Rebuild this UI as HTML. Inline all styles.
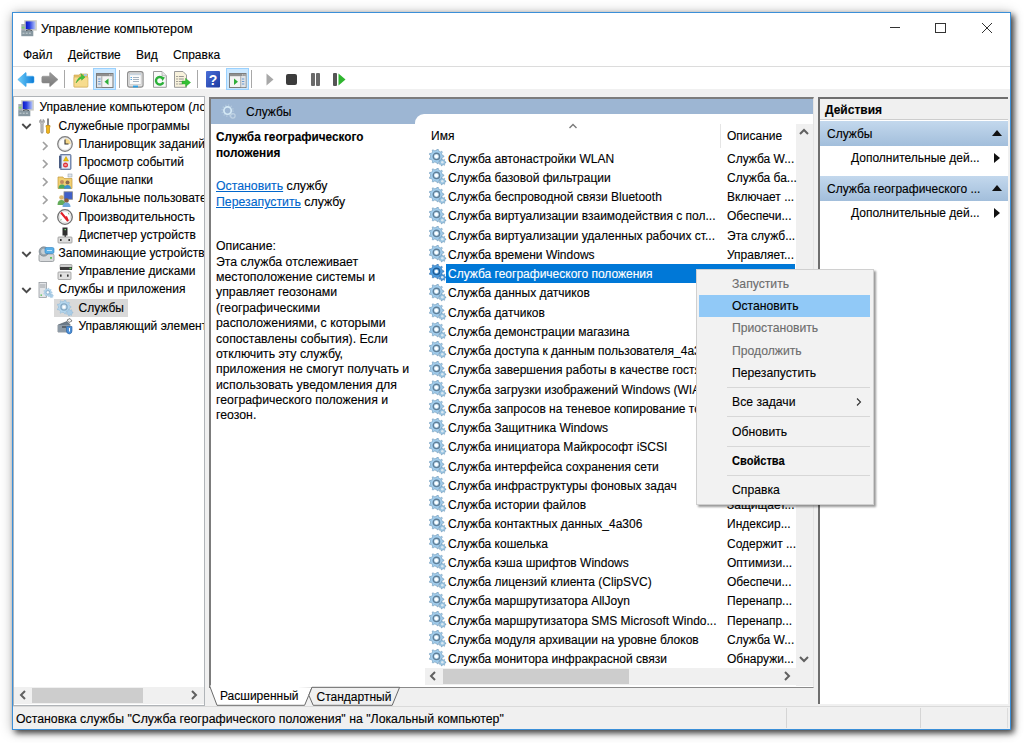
<!DOCTYPE html>
<html><head><meta charset="utf-8">
<style>
*{box-sizing:border-box}
html,body{margin:0;padding:0;width:1024px;height:743px;overflow:hidden;background:#fff;font-family:"Liberation Sans",sans-serif;font-size:12px;color:#000}
div,svg{position:absolute}
.t{white-space:nowrap;line-height:19px;height:19px;-webkit-text-stroke:0.12px currentColor}
.win{left:12px;top:12px;width:999px;height:718px;border:1px solid #3b8fd8;background:#f0f0f0;box-shadow:3px 3px 6px rgba(0,0,0,.7),0 1px 12px rgba(0,0,0,.25)}
.white{background:#fff}
.title{left:41px;top:19.5px;font-size:12.5px}
.menu{top:46px;font-size:12px}
.tb-sep{width:1px;background:#a8a8a8;top:70px;height:18px}
.pressed{background:#cce8ff;border:1px solid #99d1ff;top:68px;height:22px}
.pane{background:#fff;border:1px solid #a3a3a3}
.tr{font-size:12px}
.treesel{left:54px;width:74px;height:18px;background:#d9d9d9}
.ti{width:17px;height:17px}
.li{left:448px;font-size:12px}
.ld{left:727px;font-size:12px}
.li.sel,.ld.sel{color:#fff}
.selrow{left:446px;width:349px;height:19px;background:#0078d7}
.dl{left:216px;font-size:12.3px;line-height:16px;height:16px}
.mi{left:732px;font-size:12.2px;line-height:17px;height:17px;color:#000}
.mi.dis{color:#6d6d6d}
.mi.bold{font-weight:bold;font-size:12.6px;transform:scaleX(.88);transform-origin:0 50%}
.mhl{left:699px;width:171px;height:22px;background:#91c9f7}
.msep{left:727px;width:143px;height:1px;background:#d7d7d7}
.gear{width:18px;height:18px}
</style></head><body>
<svg width="0" height="0" style="position:absolute">
 <defs>
  <g id="g">
   <path d="M12.37 5.40 L12.53 6.12 L13.98 6.46 L13.98 7.54 L12.53 7.88 L12.14 9.23 L11.80 9.88 L12.69 11.07 L12.00 11.90 L10.67 11.23 L9.50 12.01 L8.82 12.29 L8.74 13.78 L7.68 13.97 L7.10 12.60 L5.70 12.45 L4.99 12.23 L3.98 13.31 L3.04 12.77 L3.48 11.35 L2.50 10.34 L2.10 9.71 L0.63 9.89 L0.26 8.88 L1.50 8.07 L1.41 6.66 L1.50 5.93 L0.26 5.12 L0.63 4.11 L2.10 4.29 L2.93 3.15 L3.48 2.65 L3.04 1.23 L3.98 0.69 L4.99 1.77 L6.36 1.44 L7.10 1.40 L7.68 0.03 L8.74 0.22 L8.82 1.71 L10.09 2.33 L10.67 2.77 L12.00 2.10 L12.69 2.93 L11.80 4.12Z" fill="#a2cdec" stroke="#6f98b8" stroke-width=".6"/>
   <circle cx="7" cy="7" r="3" fill="#c8e4f6" stroke="#5f7f99" stroke-width="1.3"/>
   <circle cx="7" cy="7" r="1.5" fill="#fff"/>
   <path d="M15.01 11.61 L15.15 12.08 L15.97 12.19 L15.97 13.01 L15.15 13.12 L14.87 13.87 L14.60 14.27 L15.03 14.98 L14.38 15.50 L13.78 14.92 L13.03 15.16 L12.54 15.20 L12.25 15.98 L11.45 15.80 L11.52 14.97 L10.86 14.53 L10.53 14.18 L9.74 14.44 L9.38 13.69 L10.08 13.24 L10.00 12.44 L10.08 11.96 L9.38 11.51 L9.74 10.76 L10.53 11.02 L11.10 10.47 L11.52 10.23 L11.45 9.40 L12.25 9.22 L12.54 10.00 L13.33 10.10 L13.78 10.28 L14.38 9.70 L15.03 10.22 L14.60 10.93Z" fill="#98c4e2" stroke="#6990b0" stroke-width=".45"/>
   <circle cx="12.6" cy="12.6" r="1.2" fill="#dbe8f0"/>
  </g>
  <g id="gb">
   <path d="M12.37 5.40 L12.53 6.12 L13.98 6.46 L13.98 7.54 L12.53 7.88 L12.14 9.23 L11.80 9.88 L12.69 11.07 L12.00 11.90 L10.67 11.23 L9.50 12.01 L8.82 12.29 L8.74 13.78 L7.68 13.97 L7.10 12.60 L5.70 12.45 L4.99 12.23 L3.98 13.31 L3.04 12.77 L3.48 11.35 L2.50 10.34 L2.10 9.71 L0.63 9.89 L0.26 8.88 L1.50 8.07 L1.41 6.66 L1.50 5.93 L0.26 5.12 L0.63 4.11 L2.10 4.29 L2.93 3.15 L3.48 2.65 L3.04 1.23 L3.98 0.69 L4.99 1.77 L6.36 1.44 L7.10 1.40 L7.68 0.03 L8.74 0.22 L8.82 1.71 L10.09 2.33 L10.67 2.77 L12.00 2.10 L12.69 2.93 L11.80 4.12Z" fill="#b4d6ee" stroke="#8fb6d4" stroke-width=".5"/>
   <circle cx="7" cy="7" r="3.1" fill="#cfe4f3" stroke="#86a9c4" stroke-width="1.3"/>
   <circle cx="7" cy="7" r="1.5" fill="#fff"/>
   <path d="M15.01 11.61 L15.15 12.08 L15.97 12.19 L15.97 13.01 L15.15 13.12 L14.87 13.87 L14.60 14.27 L15.03 14.98 L14.38 15.50 L13.78 14.92 L13.03 15.16 L12.54 15.20 L12.25 15.98 L11.45 15.80 L11.52 14.97 L10.86 14.53 L10.53 14.18 L9.74 14.44 L9.38 13.69 L10.08 13.24 L10.00 12.44 L10.08 11.96 L9.38 11.51 L9.74 10.76 L10.53 11.02 L11.10 10.47 L11.52 10.23 L11.45 9.40 L12.25 9.22 L12.54 10.00 L13.33 10.10 L13.78 10.28 L14.38 9.70 L15.03 10.22 L14.60 10.93Z" fill="#a9cce6" stroke="#88b0cf" stroke-width=".4"/>
  </g>
 <g id="gh">
   <circle cx="7" cy="7" r="5.6" fill="none" stroke="#b9cde0" stroke-width="2.2" stroke-dasharray="1.3 1.6" opacity=".8"/>
   <circle cx="7" cy="7" r="3.9" fill="none" stroke="#dcf0fa" stroke-width="1.8"/>
   <circle cx="12.6" cy="12.6" r="2.4" fill="none" stroke="#c4d6e6" stroke-width="1.3"/>
  </g>
 <g id="gs">
   <path d="M12.37 5.40 L12.53 6.12 L13.98 6.46 L13.98 7.54 L12.53 7.88 L12.14 9.23 L11.80 9.88 L12.69 11.07 L12.00 11.90 L10.67 11.23 L9.50 12.01 L8.82 12.29 L8.74 13.78 L7.68 13.97 L7.10 12.60 L5.70 12.45 L4.99 12.23 L3.98 13.31 L3.04 12.77 L3.48 11.35 L2.50 10.34 L2.10 9.71 L0.63 9.89 L0.26 8.88 L1.50 8.07 L1.41 6.66 L1.50 5.93 L0.26 5.12 L0.63 4.11 L2.10 4.29 L2.93 3.15 L3.48 2.65 L3.04 1.23 L3.98 0.69 L4.99 1.77 L6.36 1.44 L7.10 1.40 L7.68 0.03 L8.74 0.22 L8.82 1.71 L10.09 2.33 L10.67 2.77 L12.00 2.10 L12.69 2.93 L11.80 4.12Z" fill="#4f9ee0" stroke="#2f6fae" stroke-width=".6"/>
   <circle cx="7" cy="7" r="3" fill="#7fbbec" stroke="#1f5a92" stroke-width="1.3"/>
   <circle cx="7" cy="7" r="1.5" fill="#fff"/>
   <path d="M15.01 11.61 L15.15 12.08 L15.97 12.19 L15.97 13.01 L15.15 13.12 L14.87 13.87 L14.60 14.27 L15.03 14.98 L14.38 15.50 L13.78 14.92 L13.03 15.16 L12.54 15.20 L12.25 15.98 L11.45 15.80 L11.52 14.97 L10.86 14.53 L10.53 14.18 L9.74 14.44 L9.38 13.69 L10.08 13.24 L10.00 12.44 L10.08 11.96 L9.38 11.51 L9.74 10.76 L10.53 11.02 L11.10 10.47 L11.52 10.23 L11.45 9.40 L12.25 9.22 L12.54 10.00 L13.33 10.10 L13.78 10.28 L14.38 9.70 L15.03 10.22 L14.60 10.93Z" fill="#4a96d6" stroke="#2f6fae" stroke-width=".45"/>
   <circle cx="12.6" cy="12.6" r="1.2" fill="#dbe8f0"/>
  </g>
 </defs>
</svg>

<div class="win">
</div>

<!-- title bar -->
<div class="white" style="left:13px;top:13px;width:997px;height:54px"></div>
<div class="t title">Управление компьютером</div>
<svg style="left:21px;top:19.5px" width="16" height="17" viewBox="0 0 16 17"><defs><linearGradient id="scr" x1="0" y1="0" x2="1" y2="0"><stop offset="0" stop-color="#0a18c8"/><stop offset=".4" stop-color="#2a40e0"/><stop offset="1" stop-color="#b8c8fa"/></linearGradient></defs><rect x="3.2" y="0.2" width="12.6" height="10.4" fill="#cbcbc3"/><rect x="4.7" y="1.4" width="9.8" height="7.8" fill="url(#scr)"/><rect x="0.3" y="4" width="4" height="7" fill="#a9b0b4"/><rect x="0.8" y="6.8" width="2.6" height="1.6" fill="#7cd66a"/><path d="M5 10.6 q3 -1.6 6 0" stroke="#333" stroke-width="1" fill="none"/><rect x="0.3" y="10.6" width="12" height="5.6" fill="#8797a0"/><path d="M1.5 13.2h9.6" stroke="#c9d2d6" stroke-width="1" stroke-dasharray="2 1.2"/></svg>
<!-- window buttons -->
<div style="left:890px;top:27px;width:10px;height:1px;background:#333"></div>
<div style="left:935px;top:22.5px;width:11px;height:10px;border:1px solid #333"></div>
<svg style="left:981px;top:22px" width="12" height="12" viewBox="0 0 12 12"><path d="M1 1 L11 11 M11 1 L1 11" stroke="#333" stroke-width="1"/></svg>

<!-- menu -->
<div class="t menu" style="left:23px">Файл</div>
<div class="t menu" style="left:68px">Действие</div>
<div class="t menu" style="left:136px">Вид</div>
<div class="t menu" style="left:173px">Справка</div>
<div style="left:13px;top:66px;width:997px;height:1px;background:#dcdcdc"></div>

<!-- toolbar -->
<div class="white" style="left:13px;top:67px;width:997px;height:22px"></div>
<svg style="left:17px;top:72px" width="18" height="16" viewBox="0 0 18 16"><defs><linearGradient id="ba" x1="0" y1="0" x2="1" y2="0"><stop offset="0" stop-color="#6fd0fb"/><stop offset="1" stop-color="#0b7ad6"/></linearGradient></defs><path d="M0.8 7.6 L8.6 0.6 Q9.2 0.4 9.2 1.2 V4.2 H15.8 Q17 4.2 17 5.4 V9.8 Q17 11 15.8 11 H9.2 V14 Q9.2 14.8 8.6 14.6 Z" fill="url(#ba)" stroke="#3aa6ea" stroke-width=".5"/></svg>
<svg style="left:41px;top:72px" width="18" height="16" viewBox="0 0 18 16"><defs><linearGradient id="fa" x1="0" y1="0" x2="0" y2="1"><stop offset="0" stop-color="#9a9a9a"/><stop offset="1" stop-color="#7a7a7a"/></linearGradient></defs><path d="M17 7.6 L9.2 0.6 Q8.6 0.4 8.6 1.2 V4.2 H2 Q0.8 4.2 0.8 5.4 V9.8 Q0.8 11 2 11 H8.6 V14 Q8.6 14.8 9.2 14.6 Z" fill="url(#fa)" stroke="#8a8a8a" stroke-width=".5"/></svg>
<div class="tb-sep" style="left:64px"></div>
<svg style="left:73px;top:72px" width="16" height="16" viewBox="0 0 16 16"><path d="M1 3 H6 L7 2 H14.5 V15 H1Z" fill="#e9c46a" stroke="#c9a24a" stroke-width=".6"/><rect x="1" y="5" width="14" height="10" rx=".8" fill="#f7dc8e" stroke="#d2ad55" stroke-width=".6"/><rect x="11" y="2" width="3" height="2" fill="#a8c8e0"/><path d="M3 11 C4.5 7 6 5 8.5 4.5 L7.8 1.5 L12 5.2 L8.6 8.2 L8.5 6.4 C6.6 6.8 5 8.6 3 11Z" fill="#3fc23f" stroke="#2a9a2a" stroke-width=".4"/></svg>
<div class="pressed" style="left:93px;width:23px"></div>
<svg style="left:96px;top:73px" width="18" height="15" viewBox="0 0 18 15"><rect x="0.5" y="0.5" width="16.5" height="14" fill="#f4f4f4" stroke="#7d7d7d"/><rect x="1" y="1" width="15.5" height="2.2" fill="#8f8f8f"/><rect x="13" y="1.4" width="1" height="1" fill="#ddd"/><rect x="14.6" y="1.4" width="1" height="1" fill="#ddd"/><rect x="1" y="3.2" width="4.8" height="11" fill="#dfe3e8"/><path d="M5.8 3.2 V14" stroke="#9a9a9a" stroke-width=".8"/><path d="M2.2 6h2.4M2.2 8.5h2.4M2.2 11h2.4" stroke="#6a9ad0" stroke-width="1.1"/><path d="M12.5 5.5 L8.5 8.7 L12.5 11.9Z" fill="#2fae3a"/></svg>
<div class="tb-sep" style="left:119px"></div>
<svg style="left:127px;top:71px" width="17" height="17" viewBox="0 0 17 17"><rect x="0.6" y="0.6" width="15.5" height="15.5" rx="2.2" fill="#e2e2e2" stroke="#8c8c8c" stroke-width="1.1"/><rect x="2.6" y="2.6" width="11.5" height="11" fill="#fafafa" stroke="#b8b8b8" stroke-width=".5"/><rect x="2.6" y="2.6" width="11.5" height="1.6" fill="#c8d4e0"/><path d="M6 6.5h6M6 8.5h6M6 10.5h6" stroke="#9aa8b8" stroke-width=".9"/><path d="M3.5 6.5h1.5M3.5 8.5h1.5" stroke="#4aa0e0" stroke-width=".9"/><rect x="6" y="14.6" width="5" height="1.8" fill="#2aa0e6"/></svg>
<svg style="left:153px;top:71px" width="14" height="17" viewBox="0 0 14 17"><path d="M0.5 0.5 H9 L13.3 4.8 V16.3 H0.5Z" fill="#f9f9f9" stroke="#9a9a9a"/><path d="M9 0.5 V4.8 H13.3" fill="#e6e6e6" stroke="#9a9a9a" stroke-width=".6"/><path d="M10.3 11.2 A3.8 3.8 0 1 1 9.6 7.2" fill="none" stroke="#2cb13a" stroke-width="2.4"/><path d="M7.5 5.2 L12 6.4 L9.4 10Z" fill="#2cb13a"/></svg>
<svg style="left:174px;top:71px" width="17" height="17" viewBox="0 0 17 17"><path d="M0.5 0.5 H9 L12.5 4 V16.3 H0.5Z" fill="#f8f2dc" stroke="#9a9a9a"/><path d="M2.5 5.5h1M2.5 8h1M2.5 10.5h1M2.5 13h1" stroke="#555" stroke-width="1"/><path d="M4.8 5.5h5M4.8 8h5M4.8 10.5h3.5M4.8 13h3.5" stroke="#8a8a8a" stroke-width=".9"/><path d="M8 10 H11.5 V7.3 L16.6 11.5 L11.5 15.7 V13 H8Z" fill="#34c034" stroke="#22a022" stroke-width=".4"/></svg>
<div class="tb-sep" style="left:197px"></div>
<svg style="left:206px;top:71px" width="14" height="17" viewBox="0 0 14 17"><defs><linearGradient id="hb" x1="0" y1="0" x2="1" y2="1"><stop offset="0" stop-color="#4a6fd8"/><stop offset="1" stop-color="#1d3aa0"/></linearGradient></defs><rect x="0" y="0" width="14" height="16.5" rx="1" fill="url(#hb)"/><text x="7" y="13.5" font-family="Liberation Sans" font-size="14" font-weight="bold" fill="#fff" text-anchor="middle">?</text></svg>
<div class="pressed" style="left:226px;width:23px"></div>
<svg style="left:229px;top:73px" width="18" height="15" viewBox="0 0 18 15"><rect x="0.5" y="0.5" width="16.5" height="14" fill="#f4f4f4" stroke="#7d7d7d"/><rect x="1" y="1" width="15.5" height="2.2" fill="#8f8f8f"/><rect x="13" y="1.4" width="1" height="1" fill="#ddd"/><rect x="14.6" y="1.4" width="1" height="1" fill="#ddd"/><rect x="11.7" y="3.2" width="4.8" height="11" fill="#dfe3e8"/><path d="M11.7 3.2 V14" stroke="#9a9a9a" stroke-width=".8"/><path d="M12.9 6h2.4M12.9 8.5h2.4M12.9 11h2.4" stroke="#6a9ad0" stroke-width="1.1"/><path d="M5 5.5 L9 8.7 L5 11.9Z" fill="#2fae3a"/></svg>
<div class="tb-sep" style="left:251px"></div>
<svg style="left:266px;top:73px" width="8" height="13" viewBox="0 0 8 13"><path d="M0.5 0.5 L7.5 6.5 L0.5 12.5Z" fill="#a8a8a8"/></svg>
<div style="left:286px;top:74px;width:11px;height:11px;background:#3c3c3c;border-radius:2px"></div>
<div style="left:311px;top:73px;width:3.5px;height:13px;background:#6a6a6a;border-radius:1px"></div>
<div style="left:316px;top:73px;width:3.5px;height:13px;background:#6a6a6a;border-radius:1px"></div>
<div style="left:333px;top:73px;width:3.5px;height:13px;background:#555;border-radius:1px"></div>
<svg style="left:338px;top:73px" width="8" height="13" viewBox="0 0 8 13"><path d="M0.5 0.5 L7.5 6.5 L0.5 12.5Z" fill="#2fb52f"/></svg>

<!-- left tree pane -->
<div class="pane" style="left:13px;top:96px;width:192px;height:610px;border-color:#b0b4b8"></div>
<div style="left:0;top:0;width:203.5px;height:687px;overflow:hidden">
<svg class="ti" style="left:18px;top:100px" width="17" height="17" viewBox="0 0 17 17"><defs><linearGradient id="scr2" x1="0" y1="0" x2="1" y2="0"><stop offset="0" stop-color="#0a18c8"/><stop offset=".4" stop-color="#2a40e0"/><stop offset="1" stop-color="#b8c8fa"/></linearGradient></defs><rect x="3.2" y="0.2" width="12.6" height="10.4" fill="#cbcbc3"/><rect x="4.7" y="1.4" width="9.8" height="7.8" fill="url(#scr2)"/><rect x="0.3" y="4" width="4" height="7" fill="#a9b0b4"/><rect x="0.8" y="6.8" width="2.6" height="1.6" fill="#7cd66a"/><path d="M5 10.6 q3 -1.6 6 0" stroke="#333" stroke-width="1" fill="none"/><rect x="0.3" y="10.6" width="12" height="5.6" fill="#8797a0"/><path d="M1.5 13.2h9.6" stroke="#c9d2d6" stroke-width="1" stroke-dasharray="2 1.2"/></svg>
<div class="t tr" style="left:39.5px;top:98.4px">Управление компьютером (локальным)</div>
<svg class="chev" style="left:20.5px;top:121.1px" width="11" height="11" viewBox="0 0 11 11"><path d="M1.3 3 L5.5 7.2 L9.7 3" fill="none" stroke="#4a4a4a" stroke-width="1.9"/></svg>
<svg class="ti" style="left:38px;top:118px" width="17" height="17" viewBox="0 0 17 17"><path d="M3 1.5 C1 2.5 1.5 5 3 5.5 V14.5 Q4 16 5 14.5 V5.5 C6.5 5 7 2.5 5 1.5 V4 H3Z" fill="#d8d8d8" stroke="#7a7a7a" stroke-width=".8"/><rect x="9.3" y="0.5" width="1.4" height="7" fill="#555"/><path d="M8 7.5 h4 v1.5 l-0.5 .8 v5 q-1.5 1.5 -3 0 v-5 l-0.5 -.8z" fill="#f1b51c" stroke="#b07a00" stroke-width=".6"/></svg>
<div class="t tr" style="left:58.5px;top:116.6px">Служебные программы</div>
<svg class="chev" style="left:40px;top:140.5px" width="10" height="10" viewBox="0 0 10 10"><path d="M3 1 L7 5 L3 9" fill="none" stroke="#a0a0a0" stroke-width="1.7"/></svg>
<svg class="ti" style="left:57px;top:136px" width="17" height="17" viewBox="0 0 17 17"><circle cx="8" cy="8" r="7.3" fill="#e6e6e6" stroke="#7d7d7d" stroke-width="1.2"/><circle cx="8" cy="8" r="5.6" fill="#fdfdfd"/><path d="M8 8 V2.4 A5.6 5.6 0 0 1 13.6 8Z" fill="#f6d88a"/><path d="M8 3.5 V8 H11.5" fill="none" stroke="#333" stroke-width="1.1"/></svg>
<div class="t tr" style="left:78.5px;top:134.8px">Планировщик заданий</div>
<svg class="chev" style="left:40px;top:158.7px" width="10" height="10" viewBox="0 0 10 10"><path d="M3 1 L7 5 L3 9" fill="none" stroke="#a0a0a0" stroke-width="1.7"/></svg>
<svg class="ti" style="left:57px;top:154px" width="17" height="17" viewBox="0 0 17 17"><rect x="3" y="0.5" width="11" height="15" rx="1" fill="#8aa0c8" stroke="#55698f" stroke-width=".8"/><rect x="5" y="1.5" width="8" height="13" fill="#e7ecf5"/><rect x="2" y="2" width="2" height="12" fill="#4b5d82"/><path d="M9 2.5 L11.5 7 H6.5Z" fill="#f5c400" stroke="#b08d00" stroke-width=".5"/><circle cx="8.5" cy="11" r="2.5" fill="#e0323a"/><rect x="7.3" y="10.5" width="2.4" height="1" fill="#fff"/></svg>
<div class="t tr" style="left:78.5px;top:153.0px">Просмотр событий</div>
<svg class="chev" style="left:40px;top:176.9px" width="10" height="10" viewBox="0 0 10 10"><path d="M3 1 L7 5 L3 9" fill="none" stroke="#a0a0a0" stroke-width="1.7"/></svg>
<svg class="ti" style="left:57px;top:173px" width="17" height="17" viewBox="0 0 17 17"><path d="M1 4 h5 l1 1.5 h8 v10 h-14z" fill="#f1cf72" stroke="#c39a3a" stroke-width=".7"/><rect x="11" y="1" width="4" height="3" fill="#dfe6ee" stroke="#8a98a6" stroke-width=".5"/><circle cx="5" cy="9" r="2" fill="#c08a60"/><path d="M1.5 15.5 q0 -4 3.5 -4 q3.5 0 3.5 4z" fill="#4aa860"/><circle cx="10.5" cy="9.5" r="2" fill="#8a6a50"/><path d="M7 15.8 q0 -3.8 3.5 -3.8 q3.5 0 3.5 3.8z" fill="#3d8fd0"/></svg>
<div class="t tr" style="left:78.5px;top:171.2px">Общие папки</div>
<svg class="chev" style="left:40px;top:195.1px" width="10" height="10" viewBox="0 0 10 10"><path d="M3 1 L7 5 L3 9" fill="none" stroke="#a0a0a0" stroke-width="1.7"/></svg>
<svg class="ti" style="left:57px;top:191px" width="17" height="17" viewBox="0 0 17 17"><rect x="7" y="0.8" width="8.5" height="7.5" fill="#4060c8" stroke="#8a8a8a" stroke-width=".8"/><circle cx="4.5" cy="6.5" r="2.3" fill="#d9b46a"/><path d="M0.5 14 q0 -5 4 -5 q4 0 4 5z" fill="#63ab5a"/><circle cx="9.5" cy="9.5" r="2.3" fill="#8a5a3a"/><path d="M5.5 16 q0 -4.5 4 -4.5 q4 0 4 4.5z" fill="#6fa8dc"/></svg>
<div class="t tr" style="left:78.5px;top:189.4px">Локальные пользователи и группы</div>
<svg class="chev" style="left:40px;top:213.3px" width="10" height="10" viewBox="0 0 10 10"><path d="M3 1 L7 5 L3 9" fill="none" stroke="#a0a0a0" stroke-width="1.7"/></svg>
<svg class="ti" style="left:57px;top:209px" width="17" height="17" viewBox="0 0 17 17"><circle cx="8" cy="8" r="7.3" fill="#f4f4f4" stroke="#6f6f6f" stroke-width="1.3"/><circle cx="8" cy="8" r="5.5" fill="#fff" stroke="#d0d0d0" stroke-width=".6"/><path d="M4 3.5 L11 12 L9 7.5" fill="none" stroke="#e21f26" stroke-width="2"/><path d="M3.5 11 l1 -.6 M12 4.5 l-.9 .5" stroke="#4a9a4a" stroke-width=".9"/></svg>
<div class="t tr" style="left:78.5px;top:207.6px">Производительность</div>
<svg class="ti" style="left:57px;top:227px" width="17" height="17" viewBox="0 0 17 17"><rect x="5.5" y="0.5" width="5" height="8" fill="#2f2f2f"/><rect x="7.5" y="2" width="1.5" height="1.2" fill="#6ee06e"/><rect x="7.5" y="8" width="1.5" height="3" fill="#444"/><rect x="1" y="10" width="14" height="6" rx=".8" fill="#dcdcdc" stroke="#8a8a8a" stroke-width=".7"/><rect x="3" y="12" width="1.6" height="2" fill="#333"/><rect x="11.4" y="12" width="1.6" height="2" fill="#333"/></svg>
<div class="t tr" style="left:78.5px;top:225.8px">Диспетчер устройств</div>
<svg class="chev" style="left:20.5px;top:248.5px" width="11" height="11" viewBox="0 0 11 11"><path d="M1.3 3 L5.5 7.2 L9.7 3" fill="none" stroke="#4a4a4a" stroke-width="1.9"/></svg>
<svg class="ti" style="left:38px;top:246px" width="17" height="17" viewBox="0 0 17 17"><rect x="1" y="8" width="15" height="7.5" rx="1.5" fill="#d8dadc" stroke="#8d9296" stroke-width=".8"/><rect x="12" y="11" width="2" height="1.8" fill="#5fc25a"/><circle cx="5.8" cy="5.5" r="4.7" fill="#9aa5ad" stroke="#6b767e" stroke-width=".6"/><circle cx="5.8" cy="5.5" r="2.7" fill="#c7ced3"/><rect x="7" y="1.5" width="9" height="6" rx="1.5" fill="#5ab0e8" stroke="#2f7fbf" stroke-width=".6"/><path d="M9 4.5h5" stroke="#cfe9fb" stroke-width=".9"/></svg>
<div class="t tr" style="left:58.5px;top:244.0px">Запоминающие устройства</div>
<svg class="ti" style="left:57px;top:264px" width="17" height="17" viewBox="0 0 17 17"><rect x="3" y="0.5" width="12" height="5" rx=".8" fill="#cfcfcf" stroke="#8a8a8a" stroke-width=".6"/><rect x="3" y="3" width="12" height="3" fill="#3a3a3a"/><rect x="12.5" y="3.8" width="1.8" height="1.3" fill="#66dd66"/><rect x="1" y="8" width="13" height="7.5" rx=".8" fill="#e0e0e0" stroke="#8a8a8a" stroke-width=".7"/><rect x="3" y="10.5" width="1.6" height="2.2" fill="#333"/><rect x="10" y="10.5" width="1.6" height="2.2" fill="#333"/></svg>
<div class="t tr" style="left:78.5px;top:262.2px">Управление дисками</div>
<svg class="chev" style="left:20.5px;top:284.9px" width="11" height="11" viewBox="0 0 11 11"><path d="M1.3 3 L5.5 7.2 L9.7 3" fill="none" stroke="#4a4a4a" stroke-width="1.9"/></svg>
<svg class="ti" style="left:38px;top:282px" width="17" height="17" viewBox="0 0 17 17"><rect x="1" y="0.5" width="7.5" height="15" fill="#e3e5e8" stroke="#8a9096" stroke-width=".7"/><path d="M2 3h5.5M2 5h5.5" stroke="#8a9096" stroke-width=".8"/><rect x="2.5" y="12.5" width="1.5" height="1.3" fill="#55c055"/><g transform="translate(5.5,6) scale(0.62)"><use href="#gb"/></g></svg>
<div class="t tr" style="left:58.5px;top:280.4px">Службы и приложения</div>
<div class="treesel" style="top:298.9px"></div>
<svg class="ti" style="left:57px;top:300px" width="17" height="17" viewBox="0 0 17 17"><use href="#gb"/></svg>
<div class="t tr" style="left:78.5px;top:298.6px">Службы</div>
<svg class="ti" style="left:57px;top:318px" width="17" height="17" viewBox="0 0 17 17"><path d="M1 7 L10 3.5 L13 6.5 V14 H1Z" fill="#6c7a88" stroke="#4a5560" stroke-width=".6"/><path d="M1 7 H13 V14 H1Z" fill="#8d9aa6"/><path d="M5 9h4" stroke="#2a2f35" stroke-width="1"/><path d="M10 2 l3 -1.5 l2 2.5 l-3 1.5z" fill="#f4f4f4" stroke="#555" stroke-width=".7"/><path d="M9.5 8.5 h5.5 v4.5 q0 2.5 -2.75 3 q-2.75 -.5 -2.75 -3z" fill="#4d8fd6" stroke="#2a5fa0" stroke-width=".6"/><rect x="12" y="10" width="1" height="3.5" fill="#fff"/></svg>
<div class="t tr" style="left:78.5px;top:316.8px">Управляющий элемент WMI</div>
</div>
<!-- left hscroll -->
<div style="left:14px;top:687px;width:190px;height:17px;background:#f0f0f0"></div>
<div style="left:32px;top:688px;width:111px;height:15px;background:#cdcdcd"></div>
<svg style="left:19px;top:690px" width="8" height="10" viewBox="0 0 8 10"><path d="M6 1 L2 5 L6 9" fill="none" stroke="#606060" stroke-width="2"/></svg>
<svg style="left:190px;top:690px" width="8" height="10" viewBox="0 0 8 10"><path d="M2 1 L6 5 L2 9" fill="none" stroke="#606060" stroke-width="2"/></svg>

<!-- middle pane -->
<div class="pane" style="left:209px;top:96.5px;width:605px;height:591.5px;border-color:#8a8a8a;border-left:2px solid #7c7c7c;border-top:2px solid #7c7c7c;border-right-color:#e4e4e4;border-bottom-width:1.5px"></div>
<div style="left:211px;top:98.5px;width:602px;height:25px;background:#9db6d3"></div>
<div style="left:415px;top:113.6px;width:398px;height:12px;background:#fff;border-top-left-radius:9px"></div>
<svg style="left:221px;top:104px" width="16" height="16" viewBox="0 0 17 17"><g opacity=".9"><use href="#gh"/></g></svg>
<div class="t" style="left:246px;top:102.5px">Службы</div>

<div class="t" style="left:216px;top:128.5px;font-weight:bold;font-size:12.4px;line-height:16px;transform:scaleX(.95);transform-origin:0 50%">Служба географического</div>
<div class="t" style="left:216px;top:144.5px;font-weight:bold;font-size:12.4px;line-height:16px;transform:scaleX(.95);transform-origin:0 50%">положения</div>
<div class="t" style="left:216px;top:178px;font-size:12.3px;line-height:16px"><span style="color:#0066cc;text-decoration:underline">Остановить</span> службу</div>
<div class="t" style="left:216px;top:194px;font-size:12.3px;line-height:16px"><span style="color:#0066cc;text-decoration:underline">Перезапустить</span> службу</div>
<div class="t dl" style="top:238.3px">Описание:</div>
<div class="t dl" style="top:253.7px">Эта служба отслеживает</div>
<div class="t dl" style="top:269.0px">местоположение системы и</div>
<div class="t dl" style="top:284.4px">управляет геозонами</div>
<div class="t dl" style="top:299.7px">(географическими</div>
<div class="t dl" style="top:315.1px">расположениями, с которыми</div>
<div class="t dl" style="top:330.5px">сопоставлены события). Если</div>
<div class="t dl" style="top:345.8px">отключить эту службу,</div>
<div class="t dl" style="top:361.2px">приложения не смогут получать и</div>
<div class="t dl" style="top:376.5px">использовать уведомления для</div>
<div class="t dl" style="top:391.9px">географического положения и</div>
<div class="t dl" style="top:407.3px">геозон.</div>

<!-- list header -->
<div class="t" style="left:431px;top:127px">Имя</div>
<svg style="left:568px;top:123px" width="10" height="6" viewBox="0 0 10 6"><path d="M1.5 5 L5 1.5 L8.5 5" fill="none" stroke="#7a7a7a" stroke-width="1.4"/></svg>
<div style="left:720px;top:124px;width:1px;height:24px;background:#e5e5e5"></div>
<div class="t" style="left:727px;top:127px">Описание</div>
<!-- vscroll -->
<div style="left:796px;top:124px;width:17px;height:562px;background:#f0f0f0"></div>
<svg style="left:799px;top:128px" width="10" height="8" viewBox="0 0 10 8"><path d="M1 6 L5 2 L9 6" fill="none" stroke="#606060" stroke-width="2"/></svg>
<svg style="left:799px;top:655px" width="10" height="8" viewBox="0 0 10 8"><path d="M1 2 L5 6 L9 2" fill="none" stroke="#606060" stroke-width="2"/></svg>
<svg class="gear" style="left:429px;top:149px" width="17" height="17" viewBox="0 0 17 17"><use href="#g"/></svg>
<div class="t li" style="top:149.7px">Служба автонастройки WLAN</div>
<div class="t ld" style="top:149.7px">Служба W...</div>
<svg class="gear" style="left:429px;top:168px" width="17" height="17" viewBox="0 0 17 17"><use href="#g"/></svg>
<div class="t li" style="top:168.9px">Служба базовой фильтрации</div>
<div class="t ld" style="top:168.9px">Служба ба...</div>
<svg class="gear" style="left:429px;top:187px" width="17" height="17" viewBox="0 0 17 17"><use href="#g"/></svg>
<div class="t li" style="top:188.2px">Служба беспроводной связи Bluetooth</div>
<div class="t ld" style="top:188.2px">Включает ...</div>
<svg class="gear" style="left:429px;top:207px" width="17" height="17" viewBox="0 0 17 17"><use href="#g"/></svg>
<div class="t li" style="top:207.4px">Служба виртуализации взаимодействия с пол...</div>
<div class="t ld" style="top:207.4px">Обеспечи...</div>
<svg class="gear" style="left:429px;top:226px" width="17" height="17" viewBox="0 0 17 17"><use href="#g"/></svg>
<div class="t li" style="top:226.7px">Служба виртуализации удаленных рабочих ст...</div>
<div class="t ld" style="top:226.7px">Эта служб...</div>
<svg class="gear" style="left:429px;top:245px" width="17" height="17" viewBox="0 0 17 17"><use href="#g"/></svg>
<div class="t li" style="top:245.9px">Служба времени Windows</div>
<div class="t ld" style="top:245.9px">Управляет...</div>
<div class="selrow" style="top:264.1px"></div>
<svg class="gear" style="left:429px;top:264px" width="17" height="17" viewBox="0 0 17 17"><use href="#gs"/></svg>
<div class="t li sel" style="top:265.1px">Служба географического положения</div>
<div class="t ld sel" style="top:265.1px">Разрешает...</div>
<svg class="gear" style="left:429px;top:284px" width="17" height="17" viewBox="0 0 17 17"><use href="#g"/></svg>
<div class="t li" style="top:284.4px">Служба данных датчиков</div>
<div class="t ld" style="top:284.4px">Получает ...</div>
<svg class="gear" style="left:429px;top:303px" width="17" height="17" viewBox="0 0 17 17"><use href="#g"/></svg>
<div class="t li" style="top:303.6px">Служба датчиков</div>
<div class="t ld" style="top:303.6px">Служба да...</div>
<svg class="gear" style="left:429px;top:322px" width="17" height="17" viewBox="0 0 17 17"><use href="#g"/></svg>
<div class="t li" style="top:322.9px">Служба демонстрации магазина</div>
<div class="t ld" style="top:322.9px">Служба де...</div>
<svg class="gear" style="left:429px;top:341px" width="17" height="17" viewBox="0 0 17 17"><use href="#g"/></svg>
<div class="t li" style="top:342.1px">Служба доступа к данным пользователя_4a3...</div>
<div class="t ld" style="top:342.1px">Предостав...</div>
<svg class="gear" style="left:429px;top:361px" width="17" height="17" viewBox="0 0 17 17"><use href="#g"/></svg>
<div class="t li" style="top:361.3px">Служба завершения работы в качестве гостя</div>
<div class="t ld" style="top:361.3px">Обеспечи...</div>
<svg class="gear" style="left:429px;top:380px" width="17" height="17" viewBox="0 0 17 17"><use href="#g"/></svg>
<div class="t li" style="top:380.6px">Служба загрузки изображений Windows (WIA)</div>
<div class="t ld" style="top:380.6px">Обеспечи...</div>
<svg class="gear" style="left:429px;top:399px" width="17" height="17" viewBox="0 0 17 17"><use href="#g"/></svg>
<div class="t li" style="top:399.8px">Служба запросов на теневое копирование тома</div>
<div class="t ld" style="top:399.8px">Координи...</div>
<svg class="gear" style="left:429px;top:418px" width="17" height="17" viewBox="0 0 17 17"><use href="#g"/></svg>
<div class="t li" style="top:419.1px">Служба Защитника Windows</div>
<div class="t ld" style="top:419.1px">Помогает ...</div>
<svg class="gear" style="left:429px;top:438px" width="17" height="17" viewBox="0 0 17 17"><use href="#g"/></svg>
<div class="t li" style="top:438.3px">Служба инициатора Майкрософт iSCSI</div>
<div class="t ld" style="top:438.3px">Управляет...</div>
<svg class="gear" style="left:429px;top:457px" width="17" height="17" viewBox="0 0 17 17"><use href="#g"/></svg>
<div class="t li" style="top:457.5px">Служба интерфейса сохранения сети</div>
<div class="t ld" style="top:457.5px">Эта служб...</div>
<svg class="gear" style="left:429px;top:476px" width="17" height="17" viewBox="0 0 17 17"><use href="#g"/></svg>
<div class="t li" style="top:476.8px">Служба инфраструктуры фоновых задач</div>
<div class="t ld" style="top:476.8px">Служба ин...</div>
<svg class="gear" style="left:429px;top:495px" width="17" height="17" viewBox="0 0 17 17"><use href="#g"/></svg>
<div class="t li" style="top:496.0px">Служба истории файлов</div>
<div class="t ld" style="top:496.0px">Защищает...</div>
<svg class="gear" style="left:429px;top:515px" width="17" height="17" viewBox="0 0 17 17"><use href="#g"/></svg>
<div class="t li" style="top:515.3px">Служба контактных данных_4a306</div>
<div class="t ld" style="top:515.3px">Индексир...</div>
<svg class="gear" style="left:429px;top:534px" width="17" height="17" viewBox="0 0 17 17"><use href="#g"/></svg>
<div class="t li" style="top:534.5px">Служба кошелька</div>
<div class="t ld" style="top:534.5px">Содержит ...</div>
<svg class="gear" style="left:429px;top:553px" width="17" height="17" viewBox="0 0 17 17"><use href="#g"/></svg>
<div class="t li" style="top:553.7px">Служба кэша шрифтов Windows</div>
<div class="t ld" style="top:553.7px">Оптимизи...</div>
<svg class="gear" style="left:429px;top:572px" width="17" height="17" viewBox="0 0 17 17"><use href="#g"/></svg>
<div class="t li" style="top:573.0px">Служба лицензий клиента (ClipSVC)</div>
<div class="t ld" style="top:573.0px">Обеспечи...</div>
<svg class="gear" style="left:429px;top:592px" width="17" height="17" viewBox="0 0 17 17"><use href="#g"/></svg>
<div class="t li" style="top:592.2px">Служба маршрутизатора AllJoyn</div>
<div class="t ld" style="top:592.2px">Перенапр...</div>
<svg class="gear" style="left:429px;top:611px" width="17" height="17" viewBox="0 0 17 17"><use href="#g"/></svg>
<div class="t li" style="top:611.5px">Служба маршрутизатора SMS Microsoft Windo...</div>
<div class="t ld" style="top:611.5px">Перенапр...</div>
<svg class="gear" style="left:429px;top:630px" width="17" height="17" viewBox="0 0 17 17"><use href="#g"/></svg>
<div class="t li" style="top:630.7px">Служба модуля архивации на уровне блоков</div>
<div class="t ld" style="top:630.7px">Служба W...</div>
<svg class="gear" style="left:429px;top:649px" width="17" height="17" viewBox="0 0 17 17"><use href="#g"/></svg>
<div class="t li" style="top:649.9px">Служба монитора инфракрасной связи</div>
<div class="t ld" style="top:649.9px">Обнаружи...</div>
<!-- list hscroll -->
<div style="left:425px;top:668px;width:371px;height:17px;background:#f0f0f0"></div>
<div style="left:443px;top:669px;width:186px;height:15px;background:#cdcdcd"></div>
<svg style="left:429px;top:671px" width="8" height="10" viewBox="0 0 8 10"><path d="M6 1 L2 5 L6 9" fill="none" stroke="#606060" stroke-width="2"/></svg>
<svg style="left:783px;top:671px" width="8" height="10" viewBox="0 0 8 10"><path d="M2 1 L6 5 L2 9" fill="none" stroke="#606060" stroke-width="2"/></svg>

<!-- tabs -->
<svg style="left:208px;top:685px" width="200" height="22" viewBox="0 0 200 22">
 <path d="M1.5 0.5 L9 20.3 H96.6 L100.8 10.2 L104 2.3" fill="#fff" stroke="#6a6a6a" stroke-width="1"/>
 <path d="M104 2.3 L100.8 10.2 L105.2 20.3 H184.2 L191.6 2.3 Z" fill="#f0f0f0" stroke="#6a6a6a" stroke-width="1"/>
</svg>
<div class="t" style="left:220px;top:687px">Расширенный</div>
<div class="t" style="left:316.5px;top:688px">Стандартный</div>

<!-- actions pane -->
<div class="pane" style="left:818px;top:97px;width:190px;height:607px;border:2px solid #6e6e6e;border-right:none;border-bottom:none"></div>
<div style="left:820px;top:99px;width:188px;height:21px;background:#f0f0f0;border-bottom:1px solid #cdcdcd"></div>
<div class="t" style="left:825px;top:101px;font-weight:bold">Действия</div>
<div style="left:820px;top:121px;width:188px;height:25px;background:linear-gradient(#c3d8ed,#a2bedb)"></div>
<div class="t" style="left:827px;top:125px">Службы</div>
<svg style="left:991.5px;top:130px" width="10" height="6" viewBox="0 0 10 6"><path d="M0 6 L5 0 L10 6Z" fill="#111"/></svg>
<div class="t" style="left:851px;top:149px">Дополнительные дей...</div>
<svg style="left:994px;top:153px" width="6" height="10" viewBox="0 0 6 10"><path d="M0 0 L6 5 L0 10Z" fill="#111"/></svg>
<div style="left:820px;top:176px;width:188px;height:25px;background:linear-gradient(#c3d8ed,#a2bedb)"></div>
<div class="t" style="left:827px;top:180.2px">Служба географического ...</div>
<svg style="left:991.5px;top:185px" width="10" height="6" viewBox="0 0 10 6"><path d="M0 6 L5 0 L10 6Z" fill="#111"/></svg>
<div class="t" style="left:851px;top:204px">Дополнительные дей...</div>
<svg style="left:994px;top:208px" width="6" height="10" viewBox="0 0 6 10"><path d="M0 0 L6 5 L0 10Z" fill="#111"/></svg>

<!-- status bar -->
<div style="left:13px;top:706px;width:997px;height:23px;background:#f0f0f0;border-top:1px solid #dadada"></div>
<div class="t" style="left:16px;top:710px;font-size:12.3px">Остановка службы "Служба географического положения" на "Локальный компьютер"</div>
<div style="left:786px;top:708px;width:1px;height:20px;background:#d5d5d5"></div>
<div style="left:920px;top:708px;width:1px;height:20px;background:#d5d5d5"></div>
<div style="left:1007px;top:708px;width:1px;height:20px;background:#dcdcdc"></div>

<!-- context menu -->
<div style="left:696px;top:269px;width:178px;height:236px;background:#f2f2f2;border:1px solid #d0d0d0;box-shadow:2px 2px 2px rgba(0,0,0,.4)"></div>
<div class="t mi dis" style="top:276.2px">Запустить</div>
<div class="mhl" style="top:295px"></div>
<div class="t mi hl" style="top:298.3px">Остановить</div>
<div class="t mi dis" style="top:320.3px">Приостановить</div>
<div class="t mi dis" style="top:342.5px">Продолжить</div>
<div class="t mi " style="top:364.7px">Перезапустить</div>
<div class="t mi sub" style="top:393.9px">Все задачи</div>
<svg style="position:absolute;left:855px;top:396.6px" width="8" height="10" viewBox="0 0 8 10"><path d="M2 1.5 L5.5 5 L2 8.5" fill="none" stroke="#333" stroke-width="1.1"/></svg>
<div class="t mi " style="top:423.6px">Обновить</div>
<div class="t mi bold" style="top:452.6px">Свойства</div>
<div class="t mi " style="top:482.3px">Справка</div>
<div class="msep" style="top:387px"></div>
<div class="msep" style="top:416px"></div>
<div class="msep" style="top:446px"></div>
<div class="msep" style="top:475px"></div>
</body></html>
